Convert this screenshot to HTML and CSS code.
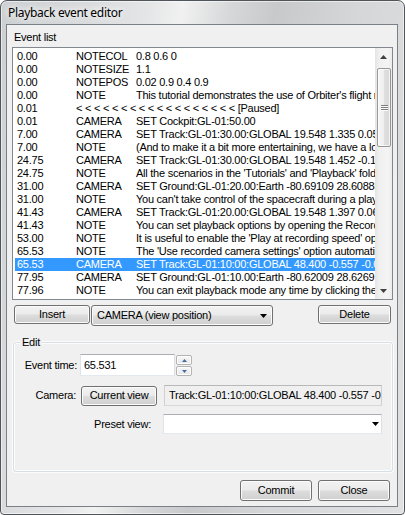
FILE: index.html
```html
<!DOCTYPE html>
<html>
<head>
<meta charset="utf-8">
<title>Playback event editor</title>
<link rel="stylesheet" href="styles.css">
</head>
<body>
<div class="window">
  <div class="titlebar"><span class="title">Playback event editor</span></div>
  <div class="client">
    <div class="caption">Event list</div>
    <div class="listbox">
      <div class="rows">
        <div class="row"><span class="c-time">0.00</span><span class="c-type">NOTECOL</span><span class="c-text">0.8 0.6 0</span></div>
        <div class="row"><span class="c-time">0.00</span><span class="c-type">NOTESIZE</span><span class="c-text">1.1</span></div>
        <div class="row"><span class="c-time">0.00</span><span class="c-type">NOTEPOS</span><span class="c-text">0.02 0.9 0.4 0.9</span></div>
        <div class="row"><span class="c-time">0.00</span><span class="c-type">NOTE</span><span class="c-text">This tutorial demonstrates the use of Orbiter's flight recorder and playback features.</span></div>
        <div class="row"><span class="c-time">0.01</span><span class="c-text">&lt; &lt; &lt; &lt; &lt; &lt; &lt; &lt; &lt; &lt; &lt; &lt; &lt; &lt; &lt; &lt; &lt; &lt; [Paused]</span></div>
        <div class="row"><span class="c-time">0.01</span><span class="c-type">CAMERA</span><span class="c-text">SET Cockpit:GL-01:50.00</span></div>
        <div class="row"><span class="c-time">7.00</span><span class="c-type">CAMERA</span><span class="c-text">SET Track:GL-01:30.00:GLOBAL 19.548 1.335 0.052</span></div>
        <div class="row"><span class="c-time">7.00</span><span class="c-type">NOTE</span><span class="c-text">(And to make it a bit more entertaining, we have a look at the launch from outside.)</span></div>
        <div class="row"><span class="c-time">24.75</span><span class="c-type">CAMERA</span><span class="c-text">SET Track:GL-01:30.00:GLOBAL 19.548 1.452 -0.103</span></div>
        <div class="row"><span class="c-time">24.75</span><span class="c-type">NOTE</span><span class="c-text">All the scenarios in the 'Tutorials' and 'Playback' folders are recorded flights.</span></div>
        <div class="row"><span class="c-time">31.00</span><span class="c-type">CAMERA</span><span class="c-text">SET Ground:GL-01:20.00:Earth -80.69109 28.60888 15.0</span></div>
        <div class="row"><span class="c-time">31.00</span><span class="c-type">NOTE</span><span class="c-text">You can't take control of the spacecraft during a playback.</span></div>
        <div class="row"><span class="c-time">41.43</span><span class="c-type">CAMERA</span><span class="c-text">SET Track:GL-01:20.00:GLOBAL 19.548 1.397 0.061</span></div>
        <div class="row"><span class="c-time">41.43</span><span class="c-type">NOTE</span><span class="c-text">You can set playback options by opening the Recorder dialog.</span></div>
        <div class="row"><span class="c-time">53.00</span><span class="c-type">NOTE</span><span class="c-text">It is useful to enable the 'Play at recording speed' option.</span></div>
        <div class="row"><span class="c-time">65.53</span><span class="c-type">NOTE</span><span class="c-text">The 'Use recorded camera settings' option automatically applies camera events.</span></div>
        <div class="row sel"><span class="c-time">65.53</span><span class="c-type">CAMERA</span><span class="c-text">SET Track:GL-01:10:00:GLOBAL 48.400 -0.557 -0.091</span></div>
        <div class="row"><span class="c-time">77.95</span><span class="c-type">CAMERA</span><span class="c-text">SET Ground:GL-01:10.00:Earth -80.62009 28.62691 12.0</span></div>
        <div class="row"><span class="c-time">77.96</span><span class="c-type">NOTE</span><span class="c-text">You can exit playback mode any time by clicking the Stop button.</span></div>
      </div>
      <div class="vscroll">
        <div class="sb-btn"><svg width="7" height="4" viewBox="0 0 7 4"><polygon points="0,4 3.5,0 7,4" fill="#404040"/></svg></div>
        <div class="sb-track">
          <div class="sb-thumb"><svg width="7" height="6" viewBox="0 0 7 6"><rect x="0" y="0" width="7" height="1" fill="#7d7d7d"/><rect x="0" y="2" width="7" height="1" fill="#7d7d7d"/><rect x="0" y="4" width="7" height="1" fill="#7d7d7d"/><rect x="0" y="1" width="7" height="1" fill="#fbfbfb"/><rect x="0" y="3" width="7" height="1" fill="#fbfbfb"/><rect x="0" y="5" width="7" height="1" fill="#fbfbfb"/></svg></div>
        </div>
        <div class="sb-btn"><svg width="7" height="4" viewBox="0 0 7 4"><polygon points="0,0 7,0 3.5,4" fill="#404040"/></svg></div>
      </div>
    </div>

    <div class="toolbar">
      <div class="btn btn-insert">Insert</div>
      <div class="btn dropdown"><span class="dd-text">CAMERA (view position)</span><svg class="dd-arrow" width="7" height="4" viewBox="0 0 7 4"><polygon points="0,0 7,0 3.5,4" fill="#000"/></svg></div>
      <div class="btn btn-delete">Delete</div>
    </div>

    <div class="group">
      <span class="group-label">Edit</span>
      <div class="form-row row-time">
        <span class="lbl lbl-time">Event time:</span>
        <div class="textbox tb-time">65.531</div>
        <div class="spin">
          <div class="spin-btn"><svg width="5" height="3" viewBox="0 0 5 3"><polygon points="0,3 2.5,0 5,3" fill="#4a6aa0"/></svg></div>
          <div class="spin-btn"><svg width="5" height="3" viewBox="0 0 5 3"><polygon points="0,0 5,0 2.5,3" fill="#4a6aa0"/></svg></div>
        </div>
      </div>
      <div class="form-row row-camera">
        <span class="lbl lbl-camera">Camera:</span>
        <div class="btn btn-current">Current view</div>
        <div class="textbox tb-readonly">Track:GL-01:10:00:GLOBAL 48.400 -0.557 -0.091</div>
      </div>
      <div class="form-row row-preset">
        <span class="lbl lbl-preset">Preset view:</span>
        <div class="combo"><svg class="dd-arrow" width="7" height="4" viewBox="0 0 7 4"><polygon points="0,0 7,0 3.5,4" fill="#000"/></svg></div>
      </div>
    </div>

    <div class="footer">
      <div class="btn btn-foot">Commit</div>
      <div class="btn btn-foot">Close</div>
    </div>
  </div>
</div>
</body>
</html>
```

FILE: styles.css
```css
* { box-sizing: border-box; }

html, body {
  margin: 0;
  padding: 0;
}

body {
  width: 405px;
  height: 515px;
  overflow: hidden;
  background: #ffffff;
  font-family: "Liberation Sans", Arial, sans-serif;
  font-size: 11px;
  letter-spacing: -0.25px;
  color: #000;
}

.window {
  width: 405px;
  height: 515px;
  border: 1px solid #50555a;
  border-radius: 7px 7px 4px 4px;
  padding: 0 6px 7px 5px;
  display: flex;
  flex-direction: column;
  background: linear-gradient(100deg, #cdd0d2 0%, #d9dbdd 18%, #e4e5e6 30%, #f1f1f1 37%, #d6d7d8 47%, #c8c9ca 56%, #d5d6d7 72%, #e0e1e2 100%);
  box-shadow: inset 0 0 0 1px rgba(255, 255, 255, 0.55);
}

.titlebar {
  height: 23px;
  flex: none;
  padding: 4px 0 0 2px;
}

.title {
  font-family: "Noto Sans", "Open Sans", sans-serif;
  font-size: 12px;
  line-height: 16px;
  letter-spacing: -0.3px;
  color: #000;
  text-shadow: 0 0 6px #fff, 0 0 10px #fff;
}

.client {
  flex: 1;
  border: 1px solid #7b8086;
  background: #f0f0f0;
  display: flex;
  flex-direction: column;
}

.caption {
  padding: 6px 0 0 7px;
  line-height: 13px;
  height: 19px;
}

/* list box */
.listbox {
  margin: 3px 0 0 5px;
  width: 381px;
  height: 253px;
  border: 1px solid #828790;
  background: #fff;
  display: flex;
  flex: none;
}

.rows {
  flex: 1;
  min-width: 0;
  overflow: hidden;
  padding: 2px 0 0 2px;
}

.row {
  display: flex;
  height: 13px;
  line-height: 13px;
  white-space: nowrap;
  padding-left: 2px;
}

.row.sel {
  background: #3399ff;
  color: #fff;
}

.c-time { width: 59px; flex: none; }
.c-type { width: 60px; flex: none; }
.c-text { flex: none; }

.vscroll {
  width: 17px;
  flex: none;
  display: flex;
  flex-direction: column;
  background: linear-gradient(90deg, #e4e4e4 0%, #f0f0f0 25%, #f4f4f4 75%, #ececec 100%);
}

.sb-btn {
  height: 17px;
  flex: none;
  display: flex;
  align-items: center;
  justify-content: center;
}

.sb-track {
  flex: 1;
  padding: 3px 1px 0 2px;
}

.sb-thumb {
  height: 79px;
  border: 1px solid #979797;
  border-radius: 2px;
  background: linear-gradient(90deg, #f6f6f6 0%, #eeeeee 50%, #dfdfdf 51%, #d8d8d8 100%);
  box-shadow: inset 0 0 0 1px rgba(255, 255, 255, 0.7);
  display: flex;
  align-items: center;
  justify-content: center;
}

/* buttons */
.btn {
  border: 1px solid #707070;
  border-radius: 3px;
  background: linear-gradient(#f2f2f2 0%, #ebebeb 48%, #dddddd 52%, #cfcfcf 100%);
  box-shadow: inset 0 0 0 1px #fbfbfb;
  display: flex;
  align-items: center;
  justify-content: center;
  line-height: 13px;
  white-space: nowrap;
  flex: none;
}

.toolbar {
  display: flex;
  align-items: flex-start;
  margin-top: 5px;
  padding: 0 6px 0 7px;
  height: 21px;
  flex: none;
}

.btn-insert {
  width: 76px;
  height: 19px;
}

.dropdown {
  margin-left: 1px;
  width: 182px;
  height: 21px;
  justify-content: space-between;
  padding: 0 5px 0 5px;
}

.dd-arrow { flex: none; }

.btn-delete {
  width: 73px;
  height: 19px;
  margin-left: auto;
}

/* group box */
.group {
  position: relative;
  margin: 16px 0 0 6px;
  width: 380px;
  height: 130px;
  flex: none;
  border: 1px solid #d5dfe5;
  border-radius: 3px;
  box-shadow: 0 0 0 1px rgba(255, 255, 255, 0.8), inset 0 0 0 1px rgba(255, 255, 255, 0.8);
  padding-top: 11px;
}

.group-label {
  position: absolute;
  left: 6px;
  top: -7px;
  padding: 0 2px;
  background: #f0f0f0;
  line-height: 13px;
}

.form-row {
  display: flex;
  align-items: center;
}

.lbl {
  flex: none;
  text-align: right;
  line-height: 13px;
  white-space: nowrap;
}

.row-time { height: 22px; }
.lbl-time { width: 63px; }

.textbox {
  flex: none;
  background: #fff;
  border: 1px solid;
  border-color: #abadb3 #dbdfe6 #e3e9ef #e2e3ea;
  line-height: 13px;
  white-space: nowrap;
  overflow: hidden;
  display: flex;
  align-items: center;
}

.tb-time {
  margin-left: 3px;
  width: 95px;
  height: 22px;
  padding-left: 3px;
}

.spin {
  margin-left: 1px;
  width: 16px;
  height: 22px;
  display: flex;
  flex-direction: column;
  gap: 1px;
  padding-top: 1px;
}

.spin-btn {
  height: 10px;
  border: 1px solid #b3b3b3;
  border-radius: 2px;
  background: linear-gradient(#f8f8f8, #e6e6e6);
  box-shadow: inset 0 0 0 1px #fff;
  display: flex;
  align-items: center;
  justify-content: center;
}

.row-camera {
  margin-top: 9px;
  height: 21px;
}

.lbl-camera { width: 62px; }

.btn-current {
  margin-left: 5px;
  width: 76px;
  height: 20px;
}

.tb-readonly {
  margin-left: 7px;
  width: 218px;
  height: 21px;
  background: #f0f0f0;
  border-color: #b8b8b8 #d0d0d0 #d8d8d8 #d0d0d0;
  padding-left: 4px;
}

.row-preset {
  margin-top: 8px;
  height: 20px;
}

.lbl-preset { width: 137px; }

.combo {
  margin-left: 12px;
  width: 219px;
  height: 20px;
  flex: none;
  background: #fff;
  border: 1px solid;
  border-color: #abadb3 #dbdfe6 #e3e9ef #e2e3ea;
  display: flex;
  align-items: center;
  justify-content: flex-end;
  padding-right: 2px;
}

.footer {
  display: flex;
  justify-content: flex-end;
  gap: 6px;
  padding-right: 7px;
  margin-top: 8px;
}

.btn-foot {
  width: 72px;
  height: 21px;
}
```
